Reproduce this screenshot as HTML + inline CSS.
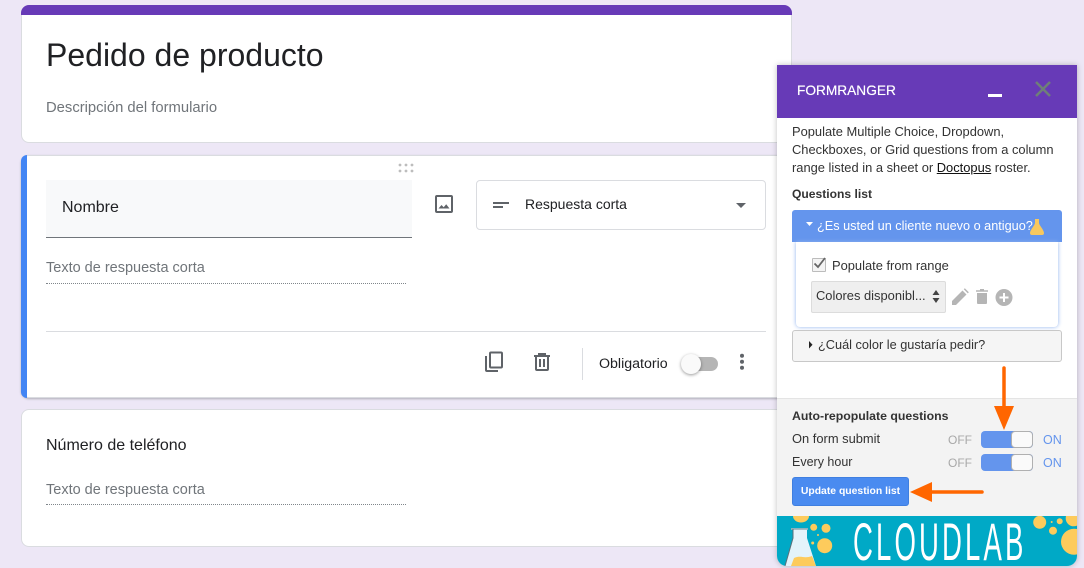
<!DOCTYPE html>
<html><head><meta charset="utf-8">
<style>
html,body{margin:0;padding:0}
body{width:1084px;height:568px;position:relative;overflow:hidden;background:#ede7f6;font-family:"Liberation Sans",sans-serif;color:#202124}
.a{position:absolute;white-space:nowrap}
.card{position:absolute;left:21px;width:769px;background:#fff;border:1px solid #dadce0;border-radius:8px;box-sizing:content-box}
.g{color:#70757a}
.p{color:#333;font-size:12.9px}
svg{position:absolute;display:block}
</style></head><body>

<div class="card" style="top:5px;height:136px"></div>
<div class="a" style="left:21px;top:5px;width:771px;height:10px;background:#673ab7;border-radius:8px 8px 0 0"></div>
<div class="a" style="left:46px;top:36px;font-size:32px;line-height:38px">Pedido de producto</div>
<div class="a g" style="left:46px;top:99px;font-size:14.8px;line-height:18px">Descripción del formulario</div>

<div class="card" style="top:155px;height:241px;box-shadow:0 1px 2px rgba(60,64,67,.35)"></div>
<div class="a" style="left:21px;top:155px;width:6px;height:243px;background:#4285f4;border-radius:8px 0 0 8px"></div>
<svg style="left:398px;top:163px" width="16" height="10" fill="#bdbdbd"><circle cx="2" cy="2" r="1.4"/><circle cx="8" cy="2" r="1.4"/><circle cx="14" cy="2" r="1.4"/><circle cx="2" cy="8" r="1.4"/><circle cx="8" cy="8" r="1.4"/><circle cx="14" cy="8" r="1.4"/></svg>
<div class="a" style="left:46px;top:180px;width:366px;height:57px;background:#f8f9fa;border-bottom:1px solid #70757a"></div>
<div class="a" style="left:62px;top:198px;font-size:16px;line-height:19px">Nombre</div>
<div class="a g" style="left:46px;top:259px;font-size:14.5px;line-height:18px">Texto de respuesta corta</div>
<div class="a" style="left:46px;top:283px;width:360px;border-top:1px dotted #80868b"></div>
<svg style="left:435px;top:195px" width="18" height="18" viewBox="0 0 18 18"><rect x="1" y="1" width="16" height="16" rx="1" fill="none" stroke="#5f6368" stroke-width="2"/><path d="M3.500 13.500l3-3.500 2.200 2.300 2.500-3 3.300 4.200z" fill="#5f6368"/></svg>
<div class="a" style="left:476px;top:180px;width:288px;height:48px;border:1px solid #dadce0;border-radius:4px"></div>
<svg style="left:493px;top:202px" width="18" height="8" fill="#5f6368"><rect x="0" y="0" width="16" height="2"/><rect x="0" y="4" width="10" height="2"/></svg>
<div class="a" style="left:525px;top:195px;font-size:14px;line-height:18px">Respuesta corta</div>
<svg style="left:736px;top:203px" width="10" height="5"><path d="M0 0h10L5 5z" fill="#5f6368"/></svg>
<div class="a" style="left:46px;top:331px;width:720px;border-top:1px solid #dadce0"></div>
<svg style="left:484px;top:351px" width="20" height="22" viewBox="0 0 20 22" fill="none" stroke="#5f6368" stroke-width="2"><rect x="6" y="1.500" width="12" height="15" rx="1"/><path d="M2 5v14a1 1 0 0 0 1 1h11"/></svg>
<svg style="left:534px;top:353px" width="16" height="18" viewBox="0 0 16 18" fill="none" stroke="#5f6368" stroke-width="2"><path d="M0 3h16M5 3V1h6v2M2 3v13a1 1 0 0 0 1 1h10a1 1 0 0 0 1-1V3M6 6v8M10 6v8"/></svg>
<div class="a" style="left:582px;top:348px;height:32px;border-left:1px solid #dadce0"></div>
<div class="a" style="left:599px;top:355px;font-size:14.200px;line-height:18px">Obligatorio</div>
<div class="a" style="left:684px;top:357px;width:34px;height:14px;border-radius:7px;background:#b5b5b5"></div>
<div class="a" style="left:681px;top:354px;width:20px;height:20px;border-radius:50%;background:#fafafa;box-shadow:0 1px 3px rgba(0,0,0,.4)"></div>
<svg style="left:739px;top:353px" width="6" height="18" fill="#5f6368"><circle cx="3" cy="2.700" r="2"/><circle cx="3" cy="8.700" r="2"/><circle cx="3" cy="14.700" r="2"/></svg>

<div class="card" style="top:409px;height:136px"></div>
<div class="a" style="left:46px;top:436px;font-size:16px;line-height:19px">Número de teléfono</div>
<div class="a g" style="left:46px;top:481px;font-size:14.5px;line-height:18px">Texto de respuesta corta</div>
<div class="a" style="left:46px;top:504px;width:360px;border-top:1px dotted #80868b"></div>

<!-- panel -->
<div class="a" style="left:777px;top:65px;width:300px;height:501px;background:#fff;box-shadow:0 0 6px rgba(0,0,0,.25);border-radius:0 0 10px 10px"></div>
<div class="a" style="left:777px;top:65px;width:300px;height:53px;background:#673ab7"></div>
<div class="a" style="left:797px;top:82px;font-size:13.700px;line-height:18px;color:#fff;text-shadow:0 0 .5px #fff">FORMRANGER</div>
<div class="a" style="left:988px;top:94px;width:14px;height:2.500px;background:#fff"></div>
<svg style="left:1035px;top:81px" width="16" height="16"><path d="M1 1l14 14M15 1L1 15" stroke="#6f7f78" stroke-width="2.500"/></svg>

<div class="a p" style="left:792px;top:123px;line-height:18px">Populate Multiple Choice, Dropdown,<br>Checkboxes, or Grid questions from a column<br>range listed in a sheet or <span style="text-decoration:underline;color:#111">Doctopus</span> roster.</div>
<div class="a p" style="left:792px;top:185px;line-height:18px;font-weight:bold;font-size:12.100px">Questions list</div>

<div class="a" style="left:792px;top:210px;width:270px;height:32px;background:#6495ed;border-radius:3px 3px 0 0"></div>
<svg style="left:806px;top:222px" width="7" height="4"><path d="M0 0h7L3.500 4z" fill="#fff"/></svg>
<div class="a" style="left:817px;top:217px;font-size:12.700px;line-height:18px;color:#fff">¿Es usted un cliente nuevo o antiguo?</div>
<svg style="left:1030px;top:219px" width="14" height="16"><path d="M5 0h4v4c0 2 5 7 5 10a2 2 0 0 1-2 2H2a2 2 0 0 1-2-2c0-3 5-8 5-10z" fill="#f7c85f"/></svg>
<div class="a" style="left:796px;top:242px;width:262px;height:85px;background:#fff;border-radius:0 0 4px 4px;box-shadow:0 0 4px #8fb2ee"></div>
<div class="a" style="left:812px;top:258px;width:12px;height:12px;border:1px solid #bcbcbc;background:#f4f4f4;border-radius:1px"></div>
<svg style="left:813px;top:257px" width="14" height="12"><path d="M1.500 6.500L5 10l7-9" fill="none" stroke="#666" stroke-width="1.800"/></svg>
<div class="a p" style="left:832px;top:257px;line-height:18px">Populate from range</div>
<div class="a" style="left:811px;top:281px;width:133px;height:30px;background:#efefef;border:1px solid #dcdcdc;border-radius:2px"></div>
<div class="a p" style="left:816px;top:287px;line-height:18px">Colores disponibl...</div>
<svg style="left:932px;top:290px" width="8" height="13" fill="#444"><path d="M4 0l3.500 5h-7zM4 13L.5 8h7z"/></svg>
<svg style="left:952px;top:288px" width="17" height="17"><path d="M0 17v-4L10.500 2.500l4 4L4 17zM11.800 1.200l1-1 4 4-1 1.200z" fill="#b5b5b5"/></svg>
<svg style="left:976px;top:289px" width="12" height="15" fill="#b5b5b5"><path d="M0 1.200h12v1.600H0zM4 0h4v1.500H4zM1 4h10v10a1 1 0 0 1-1 1H2a1 1 0 0 1-1-1z"/></svg>
<svg style="left:995px;top:289px" width="18" height="17"><circle cx="9" cy="8.500" r="8.500" fill="#b5b5b5"/><path d="M9 4v9M4.500 8.500h9" stroke="#fff" stroke-width="2"/></svg>

<div class="a" style="left:792px;top:330px;width:268px;height:30px;background:#f5f5f5;border:1px solid #c8c8c8;border-radius:3px"></div>
<svg style="left:809px;top:341px" width="4" height="8"><path d="M0 0v7.500l3.500-3.750z" fill="#222"/></svg>
<div class="a p" style="left:818px;top:336px;line-height:18px;font-size:12.750px">¿Cuál color le gustaría pedir?</div>

<div class="a" style="left:777px;top:398px;width:300px;height:118px;background:#f3f3f3;border-top:1px solid #e4e4e4;box-sizing:border-box"></div>
<div class="a p" style="left:792px;top:407px;line-height:18px;font-weight:bold;font-size:12.300px">Auto-repopulate questions</div>
<div class="a p" style="left:792px;top:430px;line-height:18px">On form submit</div>
<div class="a p" style="left:792px;top:453px;line-height:18px;font-size:12.500px">Every hour</div>
<div class="a" style="left:948px;top:431px;font-size:12px;line-height:18px;color:#a8a8a8">OFF</div>
<div class="a" style="left:948px;top:454px;font-size:12px;line-height:18px;color:#a8a8a8">OFF</div>
<div class="a" style="left:1043px;top:431px;font-size:12.500px;line-height:18px;color:#6495ed">ON</div>
<div class="a" style="left:1043px;top:454px;font-size:12.500px;line-height:18px;color:#6495ed">ON</div>
<div class="a" style="left:981px;top:431px;width:52px;height:17px;border-radius:4px;background:#6495ed;overflow:hidden"><div style="position:absolute;right:0;top:0;width:20px;height:15px;background:#fafafa;border:1px solid #b0b0b0;border-radius:4px"></div></div>
<div class="a" style="left:981px;top:454px;width:52px;height:17px;border-radius:4px;background:#6495ed;overflow:hidden"><div style="position:absolute;right:0;top:0;width:20px;height:15px;background:#fafafa;border:1px solid #b0b0b0;border-radius:4px"></div></div>
<div class="a" style="left:792px;top:477px;width:117px;height:29px;background:#4a8bf0;border:1px solid #3f7fe0;border-radius:3px;box-sizing:border-box;color:#fff;font-size:10.400px;font-weight:bold;line-height:27px;text-align:center">Update question list</div>

<!-- arrows -->
<svg style="left:990px;top:365px" width="28" height="68"><path d="M14 3v40" stroke="#ff6600" stroke-width="3.500" stroke-linecap="round"/><path d="M4 41h20L14 65z" fill="#ff6600"/></svg>
<svg style="left:908px;top:480px" width="78" height="24"><path d="M20 12h54" stroke="#ff6600" stroke-width="3.500" stroke-linecap="round"/><path d="M24 2v20L2 12z" fill="#ff6600"/></svg>

<!-- banner -->
<div class="a" style="left:777px;top:516px;width:300px;height:50px;background:#00a9c6;border-radius:0 0 10px 10px;overflow:hidden">
<svg style="left:0;top:0" width="300" height="50" viewBox="0 0 300 50">
<g fill="#fdcb5c"><ellipse cx="24" cy="0" rx="8" ry="6.500"/><circle cx="36.700" cy="11.300" r="3.500"/><circle cx="49" cy="12.300" r="4.500"/><circle cx="41" cy="19" r="1"/><circle cx="47.700" cy="29.700" r="7.500"/><circle cx="35.700" cy="27" r="1.500"/><circle cx="262.700" cy="6.300" r="6.500"/><circle cx="282.700" cy="5.300" r="3"/><circle cx="274.700" cy="6" r="1"/><circle cx="276" cy="14.700" r="4"/><circle cx="296.700" cy="2.300" r="8"/><circle cx="297" cy="25.700" r="13"/></g>
<path d="M16 13h14v9l9 28H8l8-28z" fill="#e3f3fa"/>
<path d="M17 42c7-3 10 1 18-2l4 10H14z" fill="#fdcb5c"/>
<path d="M14 13h17" stroke="#9fb3bb" stroke-width="1.800"/>
<path d="M16 13v9L8 50" stroke="#59707a" stroke-width="1" fill="none"/>
<text transform="translate(76,44) scale(.52,1)" font-family="Liberation Sans, sans-serif" font-size="53" fill="#fff" letter-spacing="6">CLOUDLAB</text>
</svg>
</div>

</body></html>
